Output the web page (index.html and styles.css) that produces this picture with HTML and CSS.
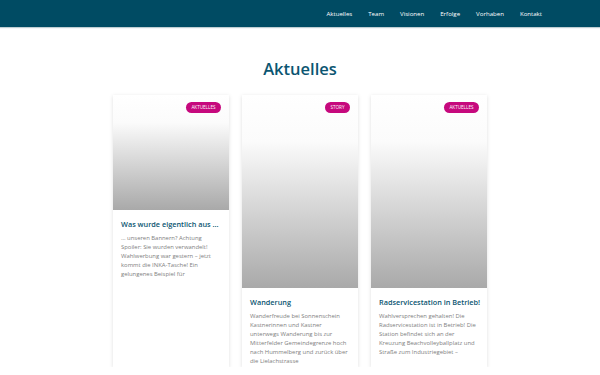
FILE: index.html
```html
<!DOCTYPE html>
<html>
<head>
  <title>Aktuelles</title>
  <link rel="stylesheet" href="styles.css">
</head>
<body>
  <header class="topbar">
    <nav class="nav">
      <a href="#aktuelles">Aktuelles</a>
      <a href="#team">Team</a>
      <a href="#visionen">Visionen</a>
      <a href="#erfolge">Erfolge</a>
      <a href="#vorhaben">Vorhaben</a>
      <a href="#kontakt">Kontakt</a>
    </nav>
  </header>

  <main id="aktuelles">
    <h1 class="section-title">Aktuelles</h1>

    <div class="cards">
      <article class="card">
        <div class="card-image short">
          <span class="badge">Aktuelles</span>
        </div>
        <div class="card-body">
          <h2>Was wurde eigentlich aus ...</h2>
          <p>… unseren Bannern? Achtung Spoiler: Sie wurden verwandelt! Wahlwerbung war gestern – jetzt kommt die INKA-Tasche! Ein gelungenes Beispiel für</p>
        </div>
      </article>

      <article class="card">
        <div class="card-image">
          <span class="badge">Story</span>
        </div>
        <div class="card-body">
          <h2>Wanderung</h2>
          <p>Wanderfreude bei Sonnenschein Kastnerinnen und Kastner unterwegs Wanderung bis zur Mitterfelder Gemeindegrenze hoch nach Hummelberg und zurück über die Lielachstrasse</p>
        </div>
      </article>

      <article class="card">
        <div class="card-image">
          <span class="badge">Aktuelles</span>
        </div>
        <div class="card-body">
          <h2>Radservicestation in Betrieb!</h2>
          <p>Wahlversprechen gehalten! Die Radservicestation ist in Betrieb! Die Station befindet sich an der Kreuzung Beachvolleyballplatz und Straße zum Industriegebiet –</p>
        </div>
      </article>
    </div>
  </main>
</body>
</html>
```

FILE: styles.css
```css
body {
  margin: 0;
  font-family: 'Open Sans', 'Noto Sans', sans-serif;
  color: #808080;
  background: #fff;
}

a {
  color: inherit;
  text-decoration: none;
}

.topbar {
  height: 27px;
  background: #004b63;
  box-shadow: 0 1px 1px rgba(0, 60, 80, 0.25);
  display: flex;
  justify-content: flex-end;
  align-items: center;
  padding-right: 50px;
}

.nav {
  display: flex;
}

.nav a {
  color: #fff;
  font-size: 6.1px;
  padding: 0 8px;
  line-height: 27px;
}

.section-title {
  margin: 0;
  padding-top: 28px;
  text-align: center;
  color: #0b5571;
  font-size: 16.5px;
  font-weight: 600;
  line-height: 28px;
}

.cards {
  display: flex;
  justify-content: center;
  gap: 13px;
  margin-top: 12px;
}

.card {
  width: 116px;
  height: 272px;
  background: #fff;
  box-shadow: 0 1px 4px rgba(0, 0, 0, 0.13);
  display: flex;
  flex-direction: column;
}

.card-image {
  position: relative;
  height: 193px;
  background: linear-gradient(#fff 0%, #fbfbfb 24%, #a9a9a9 100%);
}

.card-image.short {
  height: 115px;
}

.badge {
  position: absolute;
  top: 7px;
  right: 8px;
  background: #c6097d;
  color: #fff;
  font-size: 4.6px;
  line-height: 11px;
  padding: 0 5.5px;
  border-radius: 6px;
  text-transform: uppercase;
}

.card-body {
  padding: 9px 8px 0;
}

.card-body h2 {
  margin: 0 0 4px;
  color: #0b5571;
  font-size: 7.3px;
  font-weight: 600;
  line-height: 11px;
  white-space: nowrap;
}

.card-body p {
  margin: 0;
  font-size: 5.9px;
  line-height: 8.9px;
}
```
